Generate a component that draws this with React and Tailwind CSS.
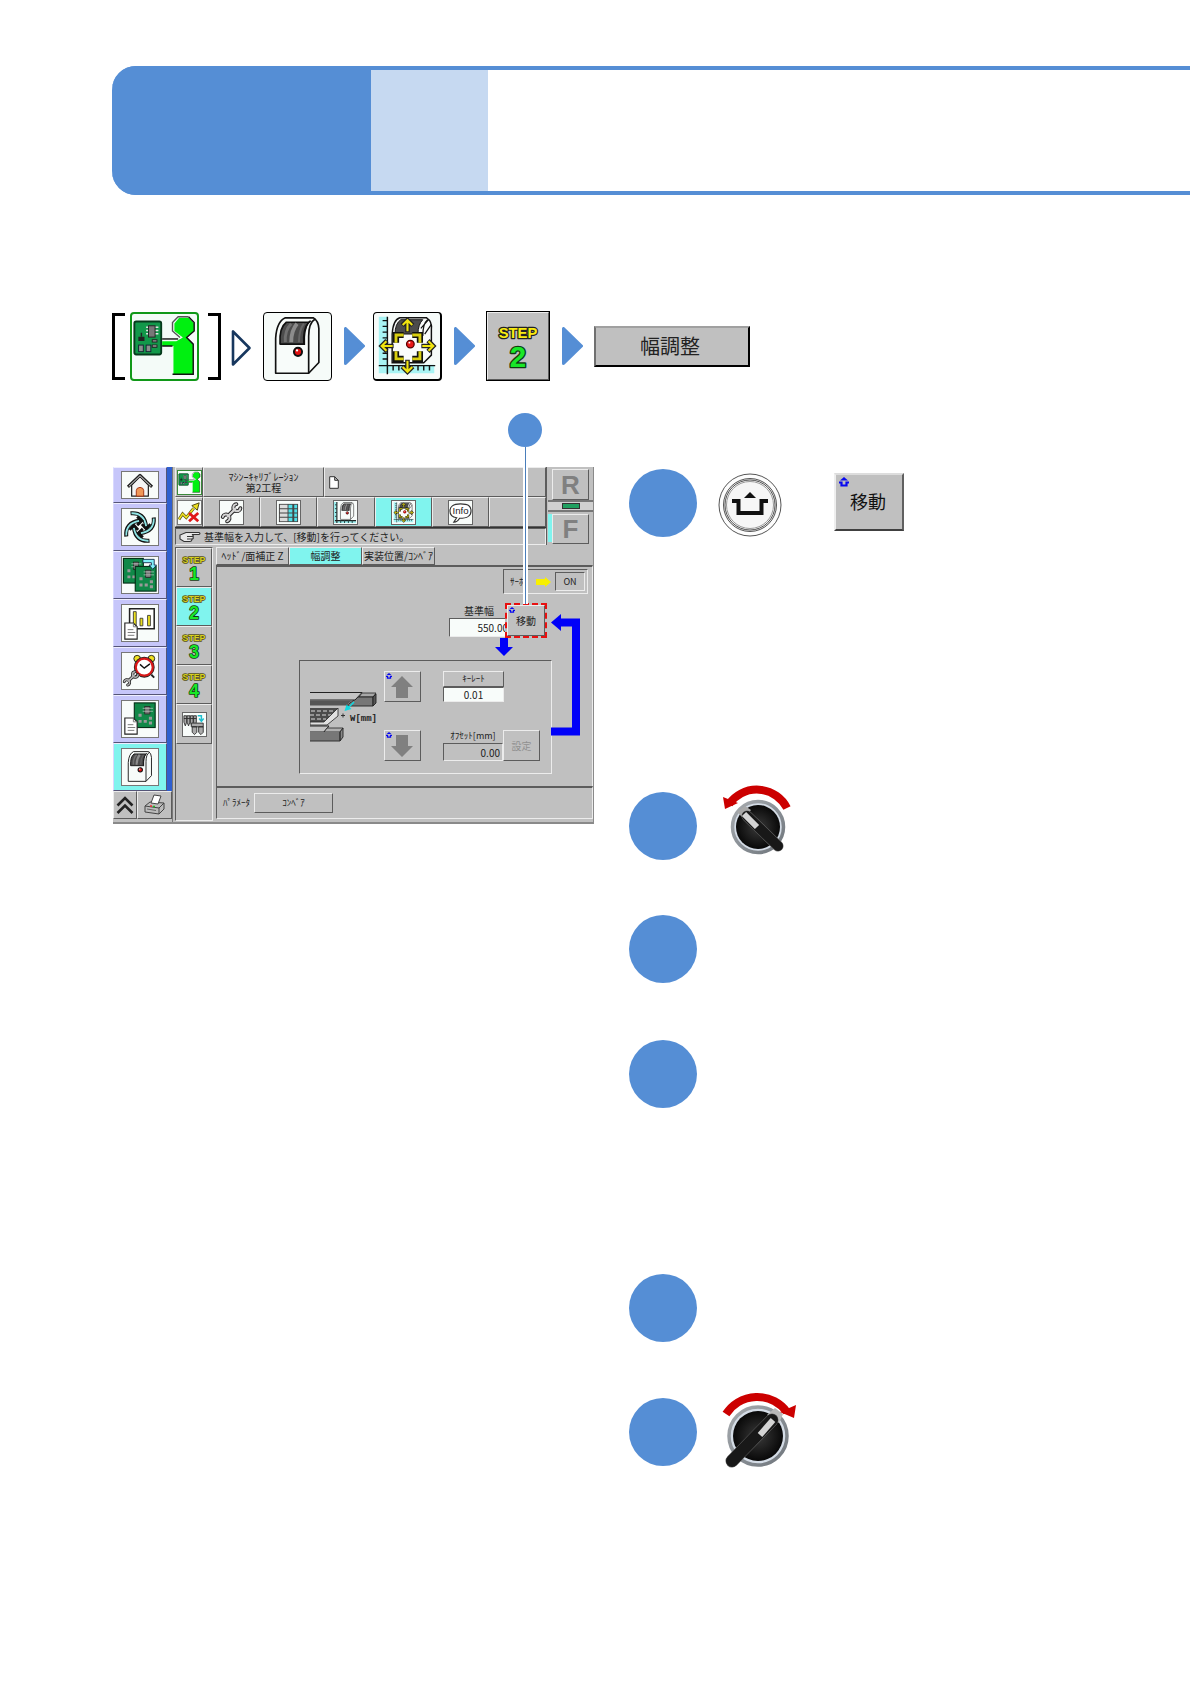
import React from "react";

const raised =
  "border border-t-[#ececec] border-l-[#ececec] border-b-[#5c5c5c] border-r-[#5c5c5c] bg-[#c0c0c0]";
const sunken =
  "border border-t-[#5c5c5c] border-l-[#5c5c5c] border-b-[#ececec] border-r-[#ececec]";

function Chip({ x, y, w, h }) {
  return <rect x={x} y={y} width={w} height={h} fill="#8a8f8c" stroke="#123" strokeWidth="1" />;
}

function OperatorArt() {
  return (
    <g>
      <rect x="2.500" y="8" width="28.500" height="35" rx="2" fill="#12984a" stroke="#063a1c" strokeWidth="2" />
      <path d="M15 14h13M15 17.500h13M15 21h13" stroke="#e4e4e4" strokeWidth="1.500" />
      <rect x="17.500" y="12.500" width="7" height="12" fill="#777" stroke="#222" />
      <path d="M10 20v4M7.500 25h5v3h-5z" fill="#222" stroke="#222" strokeWidth="1.500" />
      <path d="M21 28.500h6M21 34h6" stroke="#222" strokeWidth="3.500" />
      <path d="M22 28.500h4M22 34h4" stroke="#999" strokeWidth="1.500" />
      <Chip x={7} y={33} w={5} h={7} />
      <Chip x={15} y={33} w={5} h={7} />
      <path d="M32 26.500h17" stroke="#111" strokeWidth="1.500" />
      <path d="M50 4h10l6 6v8l-8 7 7 7v32H44V34H32v-5h15l7-4-9-7v-8z" fill="#00f010" />
      <path d="M60 3l6 6v9l-8 7 7 7v32H43M43 34H32" fill="none" stroke="#111" strokeWidth="1.500" />
      <path d="M60 3H49l-6 6v9l8 7" fill="none" stroke="#555" strokeWidth="1.500" />
    </g>
  );
}

function MachineArt() {
  return (
    <g stroke="#111" strokeWidth="1.700" strokeLinejoin="round">
      <path d="M12 62V26Q13 9 22 5L51 5Q56 8 56.500 16V51L46 62Z" fill="#f8fcfa" />
      <path d="M46 62V24Q46 10 53 6" fill="none" />
      <path d="M41.500 33V25Q42 12 48 8" fill="none" />
      <path d="M16.500 32Q15.500 15 23 9.500H46Q40 16 41 32Z" fill="#4c4c4c" />
      <path d="M22 30Q21 18 28 11" fill="none" stroke="#707070" strokeWidth="3" />
      <path d="M28 30Q28 18 34 11" fill="none" stroke="#8c8c8c" strokeWidth="4" />
      <path d="M36 30Q36 18 41 11" fill="none" stroke="#666" strokeWidth="2" />
      <circle cx="35" cy="40" r="4.200" fill="#e01010" strokeWidth="2" />
      <circle cx="34" cy="38.500" r="1.200" fill="#fff" stroke="none" />
    </g>
  );
}

function CalibArt() {
  return (
    <g>
      <path d="M5 4h9v50h49v9H5z" fill="#a8f4f4" />
      <path d="M14 4v60M5 55h59" stroke="#111" strokeWidth="1.500" />
      <path d="M9 8h5M9 14h5M9 20h5M9 26h5M9 42h5M9 48h5M20 55v5M26 55v5M46 55v5M52 55v5M58 55v5" stroke="#111" strokeWidth="1.500" />
      <path d="M19 52V22Q20 7 27 5h28q6 4 5 12v27l-8 8z" fill="#fafcfb" stroke="#111" strokeWidth="1.500" />
      <path d="M22 22Q22 11 28 7h23q-5 5-5 15z" fill="#4c4c4c" stroke="#111" />
      <path d="M51 24Q51 11 56 7M49 16L57 7M53 22L60 12" fill="none" stroke="#111" strokeWidth="1.300" />
      <path d="M23 31v-8h8M40 23h8v8M48 40v8h-8M31 48h-8v-8" fill="none" stroke="#111" strokeWidth="6.500" />
      <path d="M23 31v-8h8M40 23h8v8M48 40v8h-8M31 48h-8v-8" fill="none" stroke="#d8ce10" strokeWidth="3" />
      {[0, 90, 180, 270].map((a) => (
        <g key={a} transform={`rotate(${a} 35 34.500)`} fill="none">
          <path d="M35 20V7M29.500 13L35 7.500l5.500 5.500" stroke="#222" strokeWidth="4.800" />
          <path d="M35 19V7.500M30 12.500L35 7.500l5 5" stroke="#f0e410" strokeWidth="2.200" />
        </g>
      ))}
      <circle cx="38" cy="32.500" r="4" fill="#e81818" stroke="#500" strokeWidth="1.300" />
      <circle cx="37" cy="31" r="1" fill="#fff" />
    </g>
  );
}

function Icon({ children, className, box = "0 0 69 69" }) {
  return (
    <svg viewBox={box} className={className} aria-hidden="true">
      {children}
    </svg>
  );
}

function StepArt({ n, className, muted }) {
  return (
    <svg viewBox="0 0 44 44" className={className} role="img" aria-label={`STEP ${n}`}>
      <g textAnchor="middle" strokeLinejoin="round" paintOrder="stroke" fontFamily="'Liberation Sans', sans-serif" fontWeight="700">
        <text x="22" y="12" fontSize="12" stroke={muted ? "#55501a" : "#222"} strokeWidth="2" fill={muted ? "#d8d020" : "#f8ec10"}>STEP</text>
        <text x="22" y="36" fontSize="24" stroke="#123a12" strokeWidth="2.200" fill="#18e828">{n}</text>
      </g>
    </svg>
  );
}

function HomeArt() {
  return (
    <g strokeLinejoin="round">
      <path d="M10 14v12h18V14l-9-9z" fill="#f4f4f4" stroke="#222" strokeWidth="1.300" />
      <path d="M6 16L19 3.500 32 16" fill="none" stroke="#222" strokeWidth="3.200" />
      <path d="M7 15.500L19 4l12 11.500" fill="none" stroke="#eee" strokeWidth="1" />
      <path d="M15 26v-6q0-3 4-3.500 4 .5 4 3.500v6z" fill="#f09858" stroke="#a03010" />
    </g>
  );
}

function CycleArt() {
  return (
    <g>
      {[0, 90, 180, 270].map((a) => (
        <g key={a} transform={`rotate(${a} 19 19)`} fill="none">
          <path d="M9 4.500Q24 3 25.500 19" stroke="#111" strokeWidth="4.200" />
          <path d="M21 16l4.500 5 4.500-5" stroke="#111" strokeWidth="3" />
          <path d="M10 4.500Q23 4 25.500 18" stroke="#90e4e4" strokeWidth="1.900" />
        </g>
      ))}
    </g>
  );
}

function Board({ x, y, w, h }) {
  return (
    <g>
      <rect x={x} y={y} width={w} height={h} fill="#108848" stroke="#053018" strokeWidth="1.200" />
      <rect x={x + w * 0.5} y={y + h * 0.15} width={w * 0.25} height={h * 0.3} fill="#777" stroke="#222" strokeWidth=".8" />
      <path d={`M${x + w * 0.4} ${y + h * 0.22}h${w * 0.5}M${x + w * 0.4} ${y + h * 0.34}h${w * 0.5}`} stroke="#ccc" strokeWidth=".7" />
      <path d={`M${x + w * 0.2} ${y + h * 0.5}h${w * 0.15}M${x + w * 0.2} ${y + h * 0.75}h${w * 0.15}M${x + w * 0.45} ${y + h * 0.75}h${w * 0.15}M${x + w * 0.7} ${y + h * 0.62}h${w * 0.15}M${x + w * 0.7} ${y + h * 0.82}h${w * 0.15}`} stroke="#999" strokeWidth={h * 0.12} />
    </g>
  );
}

function BoardsArt() {
  return (
    <g>
      <Board x={1.5} y={1.500} w={21} h={26} />
      <Board x={14} y={10} w={22} h={26} />
      <path d="M22 2.500h12v6h2.500l-4 4.500-4-4.500h2.500V6h-9z" fill="#80f0f8" stroke="#124" strokeWidth=".9" />
    </g>
  );
}

function Paper({ x, y }) {
  return (
    <g transform={`translate(${x} ${y})`}>
      <path d="M0 0h9l4 4v13H0z" fill="#fff" stroke="#222" strokeWidth="1.200" />
      <path d="M9 0v4h4M3 7h6M3 10h8M3 13h7" fill="none" stroke="#777" strokeWidth="1" />
    </g>
  );
}

function ChartArt() {
  return (
    <g>
      <path d="M8 4h26v21H8z" fill="#fff" stroke="#222" strokeWidth="1.600" />
      <g fill="#ece020" stroke="#333" strokeWidth=".9">
        <path d="M12 7h3v15h-3zM19 14h3v8h-3zM27 11h3v11h-3z" />
      </g>
      <Paper x={3} y={19} />
    </g>
  );
}

function WrenchShape({ t, light = "#d4d4d4" }) {
  return (
    <g transform={t} fill="none">
      <g stroke="#222">
        <path d="M7 17L17 7" strokeWidth="4.800" />
        <path d="M17.500 2.500a4 4 0 1 0 4.500 4.500" strokeWidth="4.400" strokeLinecap="round" />
        <path d="M2 17a4 4 0 1 1 5 5" strokeWidth="4.400" strokeLinecap="round" />
      </g>
      <g stroke={light}>
        <path d="M7 17L17 7" strokeWidth="2.600" />
        <path d="M17.500 2.500a4 4 0 1 0 4.500 4.500" strokeWidth="2.200" strokeLinecap="round" />
        <path d="M2 17a4 4 0 1 1 5 5" strokeWidth="2.200" strokeLinecap="round" />
      </g>
    </g>
  );
}

function AlarmArt() {
  return (
    <g>
      <circle cx="16" cy="6" r="3.500" fill="#f0e020" stroke="#222" />
      <circle cx="31" cy="6" r="3.500" fill="#f0e020" stroke="#222" />
      <path d="M16 23l-3 3M31 23l3 3" stroke="#222" strokeWidth="2" />
      <circle cx="23.500" cy="15" r="9" fill="#fff" stroke="#222" strokeWidth="4" />
      <circle cx="23.500" cy="15" r="9" fill="#fff" stroke="#d81818" strokeWidth="2.400" />
      <path d="M19 12l4.500 4 6-4.500" fill="none" stroke="#111" strokeWidth="1.500" />
      <WrenchShape t="translate(1 18) scale(.72)" light="#b0b0b0" />
    </g>
  );
}

function DocBoardArt() {
  return (
    <g>
      <Board x={13} y={2} w={22} h={26} />
      <Paper x={3} y={18} />
    </g>
  );
}

const sideItems = [
  { name: "サイクル", art: <CycleArt /> },
  { name: "基板切替", art: <BoardsArt /> },
  { name: "生産情報", art: <ChartArt /> },
  { name: "メンテナンス", art: <AlarmArt /> },
  { name: "基板データ", art: <DocBoardArt /> },
];

function Sidebar() {
  const cell = "flex w-[54px] items-center justify-center border border-t-[#eeeeff] border-l-[#d8d8ff] border-b-[#555577] border-r-[#555577]";
  return (
    <nav className="flex w-[59px] shrink-0 flex-col">
      <div className="flex flex-col bg-[#2f5fd0]">
        <button aria-label="ホーム" className={`${cell} h-9 bg-[#c6c6fa]`}>
          <Icon box="0 0 38 28" className="h-7 w-[38px] border border-[#777777] bg-[#f8fcfa]"><HomeArt /></Icon>
        </button>
        {sideItems.map((it) => (
          <button key={it.name} aria-label={it.name} className={`${cell} h-12 bg-[#c6c6fa]`}>
            <Icon box="0 0 38 38" className="h-[38px] w-[38px] border border-[#777777] bg-[#f8fcfa]">{it.art}</Icon>
          </button>
        ))}
        <button aria-label="装置" className={`${cell} h-12 bg-[#80f4ee]`}>
          <Icon className="h-[38px] w-[38px] border border-[#777777] bg-[#f8fcfa]"><MachineArt /></Icon>
        </button>
      </div>
      <div className="flex flex-1 pb-[3px]">
        <button aria-label="上へ" className={`flex w-6 items-center justify-center ${raised}`}>
          <Icon box="0 0 18 18" className="h-[18px] w-[18px]">
            <path d="M1.500 9.500L9 2l7.500 7.500M1.500 17L9 9.500l7.500 7.500" fill="none" stroke="#222" strokeWidth="2.600" />
          </Icon>
        </button>
        <button aria-label="印刷" className={`flex flex-1 items-center justify-center ${raised}`}>
          <Icon box="0 0 22 22" className="h-[22px] w-[22px]">
            <g stroke="#444" strokeLinejoin="round">
              <path d="M1 12l5-4 14 1v6l-5 5-14-2z" fill="#bbb" />
              <path d="M1 12l14 2 5-5M15 14v6" fill="none" />
              <path d="M7 9l3-8 7 1-3 8z" fill="#fff" />
              <path d="M3 15l9 1.500" stroke="#666" />
            </g>
            <path d="M6 12h2" stroke="#e33" strokeWidth="1.500" />
            <path d="M9 12.500h2" stroke="#2b2" strokeWidth="1.500" />
          </Icon>
        </button>
      </div>
    </nav>
  );
}

function ToolArt({ kind }) {
  if (kind === "wrench") return <WrenchShape t="translate(1 1) scale(.92)" />;
  if (kind === "list")
    return (
      <g>
        <path d="M2 3h20v19H2z" fill="#444" />
        <path d="M3 4h8v3.500H3zM3 8.500h8V12H3zM3 13h8v3.500H3zM3 17.500h8V21H3z" fill="#dcdcdc" />
        <path d="M12 4h4v3.500h-4zM12 8.500h4V12h-4zM12 13h4v3.500h-4zM12 17.500h4V21h-4zM18 4h3v3.500h-3zM18 8.500h3V12h-3zM18 13h3v3.500h-3zM18 17.500h3V21h-3z" fill="#50e0e8" />
      </g>
    );
  if (kind === "axes")
    return (
      <g>
        <path d="M0 1h3v19h20v3H0z" fill="#9eeeee" />
        <path d="M3 1v22M1 20.500h22" stroke="#222" strokeWidth="1.200" />
        <path d="M1 4h2M1 8h2M1 12h2M1 16h2M7 20v3M11 20v3M15 20v3M19 20v3" stroke="#244" />
        <g transform="translate(3 0) scale(.31)" strokeWidth="3"><MachineArt /></g>
      </g>
    );
  if (kind === "calib") return <g transform="scale(.35)"><CalibArt /></g>;
  return (
    <g>
      <path d="M12 3C4 3 1 6 1 10.500S4 17 8 17.500L5 22q4 0 6-4c8 0 12-2 12-7.500S20 3 12 3z" fill="#fff" stroke="#333" strokeWidth="1.200" />
      <text x="12" y="14" fontSize="10" textAnchor="middle" fontFamily="'Liberation Sans', sans-serif" fill="#222">Info</text>
    </g>
  );
}

const tools = [
  { kind: "wrench", name: "調整" },
  { kind: "list", name: "一覧" },
  { kind: "axes", name: "装置軸" },
  { kind: "calib", name: "キャリブレーション", active: true },
  { kind: "info", name: "Info" },
];

function TopBlock() {
  return (
    <div className="flex h-[78px]">
      <div className="flex min-w-0 flex-1 flex-col pl-0.5">
        <div className="flex h-[30px]">
          <div className={`flex w-7 items-center justify-center ${raised}`}>
            <Icon className="h-[25px] w-[25px] border border-[#3a8a3a] bg-[#f8fcfa]"><OperatorArt /></Icon>
          </div>
          <h2 className={`flex w-[121px] flex-col items-center justify-center text-[10px] leading-[11px] ${raised}`}>
            <span>ﾏｼﾝｰｷｬﾘﾌﾞﾚｰｼｮﾝ</span>
            <span>第2工程</span>
          </h2>
          <div className={`flex flex-1 items-center pl-1 ${raised}`}>
            <Icon box="0 0 10 13" className="h-[13px] w-[10px]">
              <path d="M.7.7h5l3.600 3.600v8H.7z M5.700.7v3.600h3.600" fill="#fff" stroke="#333" />
            </Icon>
          </div>
        </div>
        <div className="flex h-[31px] border-b border-[#333333]">
          <button aria-label="軌跡オフ" className={`flex w-7 items-center justify-center ${raised}`}>
            <Icon box="0 0 25 25" className="h-[25px] w-[25px] border border-[#777777] bg-[#f8fcfa]">
              <path d="M1 20l4-6 4 4 8-10" fill="none" stroke="#554d10" strokeWidth="3.200" />
              <path d="M1 20l4-6 4 4 8-10" fill="none" stroke="#ece020" strokeWidth="1.800" />
              <path d="M15 5l8-3-2 8z" fill="#ece020" stroke="#443d10" />
              <path d="M12 13l10 9M22 13l-10 9" stroke="#e01818" strokeWidth="3" />
            </Icon>
          </button>
          {tools.map((t) => (
            <button key={t.kind} aria-label={t.name} className={`flex flex-1 items-center justify-center border border-t-[#ececec] border-l-[#ececec] border-b-[#5c5c5c] border-r-[#5c5c5c] ${t.active ? "bg-[#80f4ee]" : "bg-[#c0c0c0]"}`}>
              <Icon box="0 0 24 24" className="h-[25px] w-[25px] border border-[#666666] bg-[#f8fcfa]"><ToolArt kind={t.kind} /></Icon>
            </button>
          ))}
          <div className={`flex-1 ${raised}`} />
        </div>
        <p className={`flex flex-1 items-center gap-0.5 overflow-hidden whitespace-nowrap pl-0.5 text-[10px] leading-4 ${sunken}`}>
          <Icon box="0 0 24 12" className="h-3 w-6">
            <path d="M8 1.500h13q2 1 0 2h-7q2 1 1 2.500 1 1.500-1 2.300 0 2-2 2.200H6L2 8V4z" fill="#e8e8e8" stroke="#333" strokeWidth="1.100" />
            <path d="M9 5.500h6M9 8h5" stroke="#333" />
          </Icon>
          <span>基準幅を入力して、[移動]を行ってください。</span>
        </p>
      </div>
      <div className="flex w-[47px] flex-col border-l border-[#5c5c5c] pl-px">
        <div className="flex flex-1 justify-start pt-0.5 pl-1">
          <button className={`flex h-[31px] w-[37px] items-center justify-center font-[Liberation_Sans,sans-serif] text-[26px] font-bold leading-6 text-[#808080] ${raised}`}>R</button>
        </div>
        <div className="flex h-3 items-center justify-center border-y-2 border-[#777777] bg-[#d0d0d0]">
          <span className="h-1.5 w-[18px] border border-[#333333] bg-[#20a060]" />
        </div>
        <div className="flex flex-1 pt-0.5">
          <span className="h-7 w-1 bg-[#80f4ee]" />
          <button className={`flex h-[30px] w-[37px] items-center justify-center font-[Liberation_Sans,sans-serif] text-[26px] font-bold leading-6 text-[#808080] ${raised}`}>F</button>
        </div>
      </div>
    </div>
  );
}

function Steps() {
  return (
    <div className={`flex w-[38px] shrink-0 flex-col ${sunken}`}>
      {[1, 2, 3, 4].map((n) => (
        <button key={n} className={`flex h-[39px] items-end justify-center border border-t-[#ececec] border-l-[#ececec] border-b-[#5c5c5c] border-r-[#5c5c5c] ${n === 2 ? "bg-[#80f4ee]" : "bg-[#c0c0c0]"}`}>
          <StepArt n={n} muted className="h-8 w-8" />
        </button>
      ))}
      <button aria-label="ノズル" className={`flex h-10 items-center justify-center ${raised}`}>
        <Icon box="0 0 25 25" className="h-[25px] w-[25px] border border-[#666666] bg-[#f8fcfa]">
          <g fill="#aaa" stroke="#222" strokeWidth=".9">
            {[1, 4.500, 8, 11.500].map((x) => <path key={x} d={`M${x} 3h3v7l-1.500 4-1.500-4zM${x} 6h3`} />)}
            <path d="M9 11h13v4H9zM10 15h5v6l-2.500 2.500L10 21zM17 15h5v6l-2.500 2.500L17 21z" />
          </g>
          <path d="M16 3h4v5M17.500 6l2.500 3 2.500-3" fill="none" stroke="#20c0d0" strokeWidth="1.600" />
        </Icon>
      </button>
    </div>
  );
}

function Mark({ className }) {
  return (
    <svg viewBox="0 0 10 10" className={className} aria-hidden="true">
      <path d="M5 0l4 3.500H1z" fill="#0808f0" />
      <path d="M0 5.500h2.500v3h5v-3H10" fill="none" stroke="#0808f0" strokeWidth="2.200" />
    </svg>
  );
}

function JogButton({ down }) {
  return (
    <button aria-label={down ? "幅を狭める" : "幅を広げる"} className={`relative flex h-[31px] w-[37px] items-center justify-center ${raised}`}>
      <Mark className="absolute left-px top-px h-[6px] w-[6px]" />
      <svg viewBox="0 0 22 22" className="h-[22px] w-[22px]">
        <path d={down ? "M11 22L0 11h5V0h12v11h5z" : "M11 0l11 11h-5v11H5V11H0z"} fill="#808080" />
      </svg>
    </button>
  );
}

function Conveyor() {
  return (
    <svg viewBox="0 0 67 52" className="h-[52px] w-[67px] shrink-0" role="img" aria-label="コンベア幅 W">
      <path d="M49 6l3-4h14l-3 4z" fill="#a8a8a8" stroke="#222" strokeWidth=".8" />
      <path d="M36 15l12-9h15v9z" fill="#777" stroke="#222" strokeWidth=".9" />
      <path d="M63 6l3-3v9l-3 3z" fill="#555" stroke="#222" strokeWidth=".9" />
      <path d="M0 1.500h52L45 9H0z" fill="#c4c4c4" />
      <path d="M0 1.500h52L45 9H0" fill="none" stroke="#222" />
      <path d="M0 9.500h42l-6 5H0z" fill="#555" />
      <path d="M0 17h28L14 31H0z" fill="#4c4c4c" />
      <path d="M1 20h24M0 24h21M1 28h15" stroke="#aaa" strokeDasharray="4 2" strokeWidth="1.600" />
      <path d="M28 17v8L17 34H0v-3h14z" fill="#e0e0e0" stroke="#222" strokeWidth=".8" />
      <path d="M0 35h19l-5 6H0z" fill="#c4c4c4" />
      <path d="M0 35h19l-5 6H0" fill="none" stroke="#222" />
      <path d="M17 37h16l-3 4H14z" fill="#b0b0b0" stroke="#222" strokeWidth=".8" />
      <path d="M0 41h30v9H0z" fill="#777" />
      <path d="M30 41l3-4v9l-3 4z" fill="#888" stroke="#222" strokeWidth=".9" />
      <path d="M0 50h30V41" fill="none" stroke="#333" />
      <path d="M44 11l-6 6" fill="none" stroke="#10d8e0" strokeWidth="1.600" />
      <path d="M34.500 20l2-6.500 5 4.500z" fill="#10d8e0" />
      <path d="M31 24.500h4M33 22.500v4" stroke="#333" />
      <text x="40" y="30" fontSize="9" fontWeight="700" fontFamily="'Liberation Mono', monospace" fill="#222">W[mm]</text>
    </svg>
  );
}

function WidthPanel() {
  return (
    <section className="flex min-w-0 flex-1 flex-col pl-[3px]">
      <div role="tablist" className="flex h-[18px] text-[10px] leading-4">
        <button role="tab" className={`w-[73px] whitespace-nowrap ${raised}`}>ﾍｯﾄﾞ/面補正 Z</button>
        <button role="tab" aria-selected="true" className="w-[73px] whitespace-nowrap border border-t-[#ececec] border-l-[#ececec] border-b-[#5c5c5c] border-r-[#5c5c5c] bg-[#80f4ee]">幅調整</button>
        <button role="tab" className={`w-[73px] whitespace-nowrap ${raised}`}>実装位置/ｺﾝﾍﾞｱ</button>
      </div>
      <div className="relative flex flex-1 flex-col border-t-2 border-l border-r border-t-[#5c5c5c] border-l-[#5c5c5c] border-r-[#ececec]">
        <div className={`mr-1 mt-0.5 flex h-[25px] w-[85px] items-center justify-end gap-1 self-end pr-0.5 text-[9px] leading-4 ${sunken}`}>
          <span className="mr-1">ｻｰﾎﾞ</span>
          <svg viewBox="0 0 15 10" className="h-2.5 w-[15px]" aria-hidden="true">
            <path d="M0 2h9V0l6 5-6 5V8H0z" fill="#f8f000" />
          </svg>
          <span className={`flex h-[19px] w-[30px] items-center justify-center ${sunken}`}>ON</span>
        </div>
        <div className="mr-[45px] mt-[9px] flex self-end">
          <div className="-mr-1 flex w-[60px] flex-col">
            <label htmlFor="base-width" className="pt-px text-center text-[10px] leading-[14px]">基準幅</label>
            <input id="base-width" defaultValue="550.00" className={`h-[19px] w-full bg-[#f8fcfa] text-right text-[10px] leading-4 ${sunken}`} />
          </div>
          <div className="relative border-2 border-dashed border-[#e81010] bg-[#c0c0c0]">
            <button className={`flex h-[31px] w-[38px] items-center justify-center text-[10px] leading-4 ${raised}`}>
              <Mark className="absolute left-0.5 top-0.5 h-[6px] w-[6px]" />
              移動
            </button>
          </div>
        </div>
        <svg viewBox="0 0 18 18" className="mr-[79px] h-[18px] w-[18px] self-end" aria-hidden="true">
          <path d="M5 0h8v9h5l-9 9-9-9h5z" fill="#0000f8" />
        </svg>
        <svg viewBox="0 0 29 122" className="absolute right-[12px] top-[47px] h-[122px] w-[29px]" aria-hidden="true">
          <path d="M0 117.500h25V8.500H8" fill="none" stroke="#0000f8" strokeWidth="8" />
          <path d="M0 8.500L10 0v17z" fill="#0000f8" />
        </svg>
        <div className={`mb-3 ml-[82px] mr-10 mt-1 flex flex-1 justify-between pb-3 pl-2.5 pr-[11px] pt-2.5 ${sunken}`}>
          <div className="flex items-start pt-5"><Conveyor /></div>
          <div className="flex flex-col justify-between">
            <JogButton />
            <JogButton down />
          </div>
          <div className="ml-4 flex flex-col justify-between text-[10px]">
            <div className="w-[61px]">
              <button id="key-rate" className={`block h-4 w-full text-[9px] leading-[14px] ${raised}`}>ｷｰﾚｰﾄ</button>
              <input aria-labelledby="key-rate" defaultValue="0.01" className={`block h-[15px] w-full bg-[#f8fcfa] text-center leading-3 ${sunken}`} />
            </div>
            <div className="flex items-end">
              <div className="w-[60px]">
                <label htmlFor="offset" className="block whitespace-nowrap text-center text-[9px] leading-[14px]">ｵﾌｾｯﾄ[mm]</label>
                <input id="offset" defaultValue="0.00" className={`block h-[18px] w-full bg-transparent pr-0.5 text-right leading-4 ${sunken}`} />
              </div>
              <button disabled className={`h-[31px] w-[37px] leading-4 text-[#909090] ${raised}`}>設定</button>
            </div>
          </div>
        </div>
      </div>
      <div className={`mb-0.5 flex h-[33px] items-center gap-1 border-t-2 pl-1.5 text-[9px] leading-4 ${sunken}`}>
        <span>ﾊﾟﾗﾒｰﾀ</span>
        <button className={`h-5 w-[79px] ${raised}`}>ｺﾝﾍﾞｱ</button>
      </div>
    </section>
  );
}

function MachineScreen() {
  return (
    <div className="relative flex h-[357px] border-b-2 border-r border-[#8a8a8a] bg-[#c0c0c0]">
      <Sidebar />
      <div className="flex min-w-0 flex-1 flex-col border-l border-[#777777]">
        <TopBlock />
        <div className="flex flex-1 pb-px pl-0.5 pt-0.5">
          <Steps />
          <WidthPanel />
        </div>
      </div>
      <div className="absolute -top-[54px] right-[51px] flex flex-col items-center" aria-hidden="true">
        <span className="h-[34px] w-[34px] rounded-full bg-[#558ed5]" />
        <span className="flex h-[157px] w-[5px] justify-center bg-white"><span className="w-px bg-[#4a7ebb]" /></span>
      </div>
    </div>
  );
}

function Arrow({ outline }) {
  return (
    <svg viewBox="0 0 21 38" className="h-[38px] w-[21px] shrink-0" aria-hidden="true">
      {outline ? (
        <path d="M2 2.500v33L18.500 19z" fill="#fff" stroke="#17375e" strokeWidth="2.600" strokeLinejoin="round" />
      ) : (
        <path d="M1.500 1.500v35L19.500 19z" fill="#558ed5" stroke="#558ed5" strokeWidth="3" strokeLinejoin="round" />
      )}
    </svg>
  );
}

function Breadcrumb() {
  return (
    <nav className="flex h-[70px] items-center">
      <span className="h-[67px] w-[13px] border-[3px] border-r-0 border-black" />
      <button aria-label="オペレータ" className="ml-[5px] rounded-sm border-2 border-[#109818] bg-[#f4fbf8]">
        <Icon className="h-[65px] w-[65px]"><OperatorArt /></Icon>
      </button>
      <span className="ml-[9px] h-[67px] w-[13px] border-[3px] border-l-0 border-black" />
      <span className="ml-2.5 mt-1"><Arrow outline /></span>
      <button aria-label="装置" className="ml-[11px] rounded-sm border border-black bg-[#f6fbf9]">
        <Icon className="h-[67px] w-[67px]"><MachineArt /></Icon>
      </button>
      <span className="ml-3"><Arrow /></span>
      <button aria-label="キャリブレーション" className="ml-2 rounded-sm border-2 border-t border-l border-black bg-[#f6fbf9]">
        <Icon className="h-[66px] w-[66px]"><CalibArt /></Icon>
      </button>
      <span className="ml-3"><Arrow /></span>
      <button className="ml-[11px] border border-black">
        <span className={`flex h-[68px] w-[62px] items-center justify-center pt-2 ${raised}`}>
          <StepArt n={2} className="h-[54px] w-[54px]" />
        </span>
      </button>
      <span className="ml-3"><Arrow /></span>
      <button className="ml-[11px] h-[41px] w-[156px] border-2 border-t-[#a0a0a0] border-l-[#707070] border-b-black border-r-black bg-[#c0c0c0] pr-1 text-xl leading-8 text-[#222222]">幅調整</button>
    </nav>
  );
}

function Dot() {
  return <span className="h-[68px] w-[68px] shrink-0 rounded-full bg-[#558ed5]" />;
}

function Knob({ right }) {
  return (
    <svg viewBox="0 0 80 82" className="-mt-2 h-[82px] w-20" role="img" aria-label={right ? "スイッチを右に回す" : "スイッチを左に回す"}>
      <defs>
        <linearGradient id={right ? "ringR" : "ringL"} x1="0" y1="0" x2="1" y2="1">
          <stop offset="0" stopColor="#a8acb0" />
          <stop offset=".5" stopColor="#8a9096" />
          <stop offset="1" stopColor="#70767c" />
        </linearGradient>
        <radialGradient id={right ? "capR" : "capL"}>
          <stop offset="0" stopColor="#3a3a3a" />
          <stop offset="1" stopColor="#080808" />
        </radialGradient>
      </defs>
      {right ? (
        <g>
          <circle cx="39" cy="46" r="29" fill="#d4dce6" stroke="url(#ringR)" strokeWidth="3.500" />
          <circle cx="39" cy="46" r="25" fill="url(#capR)" />
          <path d="M48 25l8-7 8 6-4 9z" fill="#b8b8b8" />
          <path d="M13 71L53 30" stroke="#666" strokeWidth="13" strokeLinecap="round" />
          <path d="M13 71L53 30" stroke="#181818" strokeWidth="12" strokeLinecap="round" />
          <path d="M41 45l13-15" stroke="#d4d4d4" strokeWidth="6" />
          <path d="M7 24A37 37 0 0 1 68 22" fill="none" stroke="#cc0000" strokeWidth="8" />
          <path d="M61 22l16-7-2 13z" fill="#cc0000" />
        </g>
      ) : (
        <g>
          <circle cx="39" cy="43" r="25.500" fill="#d4dce6" stroke="url(#ringL)" strokeWidth="3.500" />
          <circle cx="39" cy="43" r="22" fill="url(#capL)" />
          <path d="M18 28l8-6 6 4-7 9z" fill="#a8a8a8" />
          <path d="M28 32L59 62" stroke="#666" strokeWidth="11" strokeLinecap="round" />
          <path d="M28 32L59 62" stroke="#181818" strokeWidth="10" strokeLinecap="round" />
          <path d="M25 30l13 13" stroke="#d4d4d4" strokeWidth="6" />
          <path d="M68 24A34 34 0 0 0 10 20" fill="none" stroke="#cc0000" strokeWidth="8" />
          <path d="M4 13l2 12 13-6z" fill="#cc0000" />
        </g>
      )}
    </svg>
  );
}

function Procedure() {
  return (
    <ol className="flex flex-col pt-0.5">
      <li className="flex h-[323px] items-start">
        <Dot />
        <svg viewBox="0 0 64 64" className="ml-[21px] mt-1 h-16 w-16" role="img" aria-label="実行キー">
          <g fill="#fdfdfd" stroke="#555">
            <circle cx="32" cy="32" r="31" />
            <circle cx="32" cy="32" r="26.500" fill="#e8e8e8" />
            <circle cx="32" cy="32" r="25" />
            <circle cx="32" cy="32" r="23.500" fill="#f6f6f6" stroke="#999" />
          </g>
          <path d="M14 28h6.500v12h23V28H50" fill="none" stroke="#111" strokeWidth="4" />
          <path d="M32 19l6 6H26z" fill="#111" />
        </svg>
        <button className="relative ml-[52px] mt-1 flex h-[58px] w-[70px] items-center justify-center border-2 border-t-[#dddddd] border-l-[#eeeeee] border-b-[#404040] border-r-[#606060] bg-[#c0c0c0] pr-0.5 pb-0.5 text-lg leading-6 text-[#111111]">
          <Mark className="absolute left-[3px] top-0.5 h-[10px] w-[10px]" />
          移動
        </button>
      </li>
      <li className="flex h-[123px] items-start gap-[22px]"><Dot /><Knob /></li>
      <li className="flex h-[125px]"><Dot /></li>
      <li className="flex h-[234px]"><Dot /></li>
      <li className="flex h-[124px]"><Dot /></li>
      <li className="flex items-start gap-[22px]"><Dot /><Knob right /></li>
    </ol>
  );
}

export default function App() {
  return (
    <main className="min-h-screen bg-white pl-28 pt-[66px] font-['Noto_Sans_CJK_JP',sans-serif] text-[#222222]">
      <header className="flex h-[129px] rounded-l-3xl border-y-4 border-[#558ed5]">
        <div className="-my-1 w-[259px] rounded-l-3xl bg-[#558ed5]" />
        <div className="w-[117px] bg-[#c6d9f1]" />
      </header>
      <div className="mt-[116px]"><Breadcrumb /></div>
      <div className="ml-px mt-[86px] grid grid-cols-[minmax(0,481fr)_minmax(0,561fr)] gap-[35px]">
        <MachineScreen />
        <Procedure />
      </div>
    </main>
  );
}
